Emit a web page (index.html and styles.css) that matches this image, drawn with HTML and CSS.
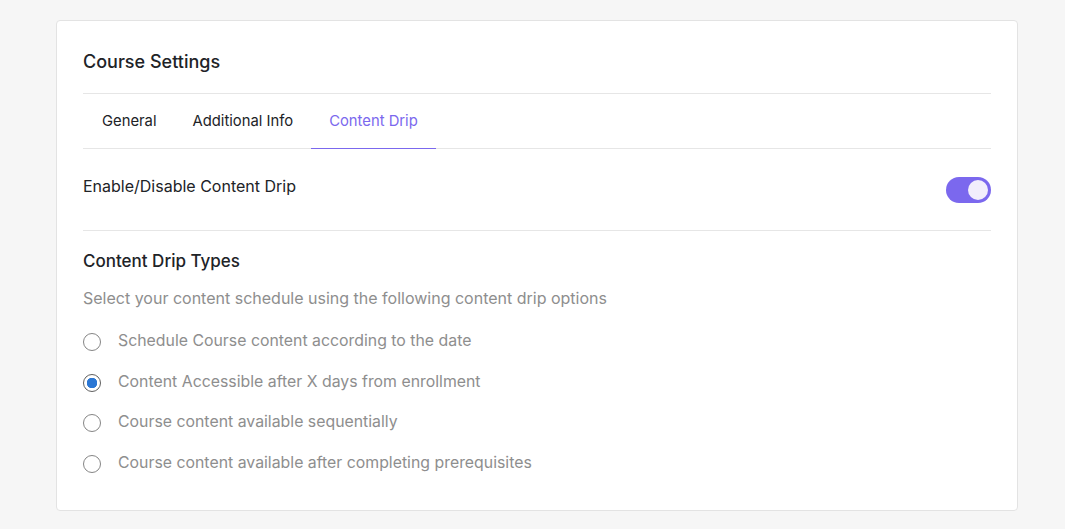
FILE: index.html
```html
<!DOCTYPE html>
<html>
<head>
<meta charset="utf-8">
<link rel="stylesheet" href="styles.css">
</head>
<body>
<div class="card">
  <h2 class="title">Course Settings</h2>
  <nav class="tabs">
    <span class="tab">General</span>
    <span class="tab">Additional Info</span>
    <span class="tab active">Content Drip</span>
  </nav>
  <div class="toggle-row">
    <span class="toggle-label">Enable/Disable Content Drip</span>
    <span class="switch"><span class="knob"></span></span>
  </div>
  <div class="types">
    <h3 class="types-title">Content Drip Types</h3>
    <p class="types-desc">Select your content schedule using the following content drip options</p>
    <ul class="options">
      <li class="option"><span class="radio"></span>Schedule Course content according to the date</li>
      <li class="option"><span class="radio checked"></span>Content Accessible after X days from enrollment</li>
      <li class="option"><span class="radio"></span>Course content available sequentially</li>
      <li class="option"><span class="radio"></span>Course content available after completing prerequisites</li>
    </ul>
  </div>
</div>
</body>
</html>
```
FILE: styles.css
```css
html, body {
  margin: 0;
  padding: 0;
  background: #f6f6f6;
  font-family: Inter, "Noto Sans", sans-serif;
  color: #212327;
}
body {
  padding: 20px 46px 0 56px;
}
.card {
  background: #fff;
  border: 1px solid #e3e3e3;
  border-radius: 4px;
  padding: 27px 26px 36px 26px;
  width: 908px;
}
.title {
  margin: 0;
  font-size: 18px;
  font-weight: 500;
  line-height: 28px;
  padding-bottom: 17px;
  border-bottom: 1px solid #e6e6e6;
}
.tabs {
  display: flex;
  padding-left: 1px;
  border-bottom: 1px solid #e6e6e6;
}
.tab {
  padding: 0 18px;
  font-size: 14.8px;
  font-weight: 400;
  line-height: 54px;
  color: #212327;
  box-sizing: border-box;
  margin-bottom: -1px;
  height: 55px;
  border-bottom: 1px solid transparent;
}
.tab.active {
  color: #7b68ee;
  border-bottom-color: #7b68ee;
}
.toggle-row {
  display: flex;
  justify-content: space-between;
  align-items: flex-start;
  padding: 27px 0 27px;
  border-bottom: 1px solid #e6e6e6;
}
.toggle-label {
  font-size: 16px;
  font-weight: 400;
  line-height: 20px;
}
.switch {
  margin-top: 1px;
  width: 45px;
  height: 26px;
  border-radius: 13px;
  background: #7b68ee;
  display: flex;
  align-items: center;
  justify-content: flex-end;
  padding-right: 3px;
  box-sizing: border-box;
}
.knob {
  width: 20px;
  height: 20px;
  border-radius: 50%;
  background: #f2eefc;
}
.types {
  padding-top: 18px;
}
.types-title {
  margin: 0;
  font-size: 17px;
  font-weight: 500;
  line-height: 24px;
}
.types-desc {
  margin: 14px 0 0;
  font-size: 16px;
  line-height: 22px;
  color: #8e8e8e;
}
.options {
  list-style: none;
  margin: 21px 0 0;
  padding: 0;
  display: flex;
  flex-direction: column;
  gap: 18.6px;
}
.option {
  display: flex;
  align-items: center;
  font-size: 15.85px;
  line-height: 22px;
  color: #8e8e8e;
}
.radio {
  width: 18px;
  height: 18px;
  border: 1px solid #858585;
  border-radius: 50%;
  box-sizing: border-box;
  margin-right: 17px;
  margin-top: 2px;
  flex: none;
}
.radio.checked {
  background: radial-gradient(circle, #2b77d4 0 5px, #fff 5.5px);
  border-color: #5f5f5f;
}
```
